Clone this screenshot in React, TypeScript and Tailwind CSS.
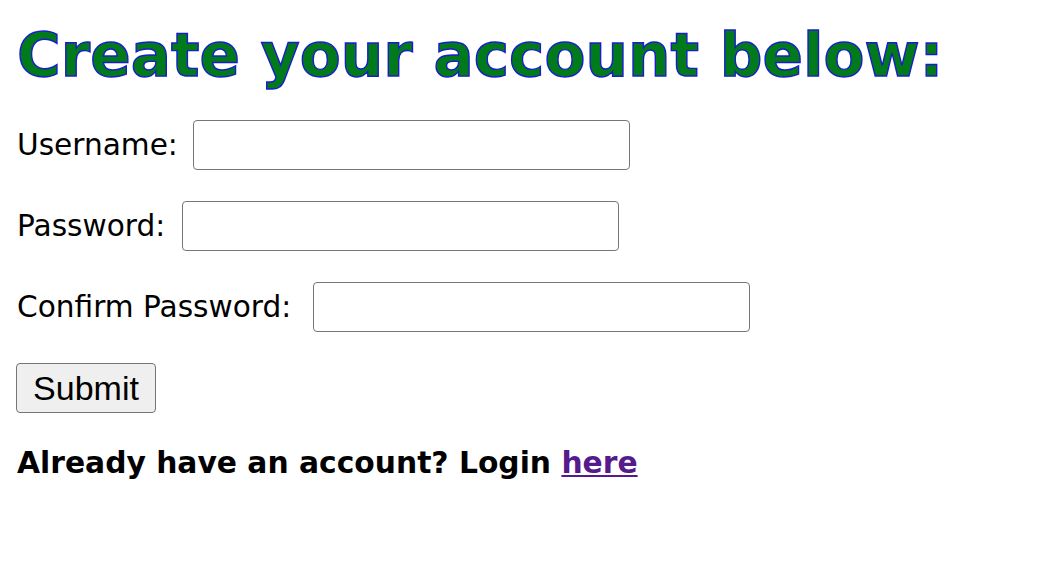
import React from "react";

export default function App() {
  const font = { fontFamily: '"DejaVu Sans", Verdana, sans-serif' };
  return (
    <div className="min-h-[584px] w-[1052px] bg-white text-black" style={font}>
      <div className="flex flex-col pl-[17px] pt-[21px]">
        <h1 className="text-[59.7px] font-bold leading-[1.164] text-[#007a1a] [-webkit-text-stroke:1.4px_#1a1ad0] [font-family:'DejaVu_Sans',Verdana,sans-serif]">
          Create your account below:
        </h1>
        <div className="mt-[30px] flex h-[50px] items-center text-[29.6px]">
          <label>Username:</label>
          <input type="text" className="ml-[15px] h-[50px] w-[437px] rounded-[4px] border-[1.5px] border-[#767676] bg-white" />
        </div>
        <div className="mt-[31px] flex h-[50px] items-center text-[29.6px]">
          <label>Password:</label>
          <input type="password" className="ml-[17px] h-[50px] w-[437px] rounded-[4px] border-[1.5px] border-[#767676] bg-white" />
        </div>
        <div className="mt-[31px] flex h-[50px] items-center text-[29.6px]">
          <label>Confirm Password:</label>
          <input type="password" className="ml-[22px] h-[50px] w-[437px] rounded-[4px] border-[1.5px] border-[#767676] bg-white" />
        </div>
        <div className="mt-[31px] flex h-[50px] items-center">
          <button className="-ml-px h-[50px] w-[140px] rounded-[4px] border-[1.5px] border-[#767676] bg-[#efefef] text-[34px] leading-none text-black [font-family:'Liberation_Sans',Arial,sans-serif]">
            Submit
          </button>
        </div>
        <p className="mt-[33px] text-[29.75px] font-bold leading-[1.164]">
          Already have an account? Login{" "}
          <a href="#" className="text-[#551a8b] underline">here</a>
        </p>
      </div>
    </div>
  );
}
